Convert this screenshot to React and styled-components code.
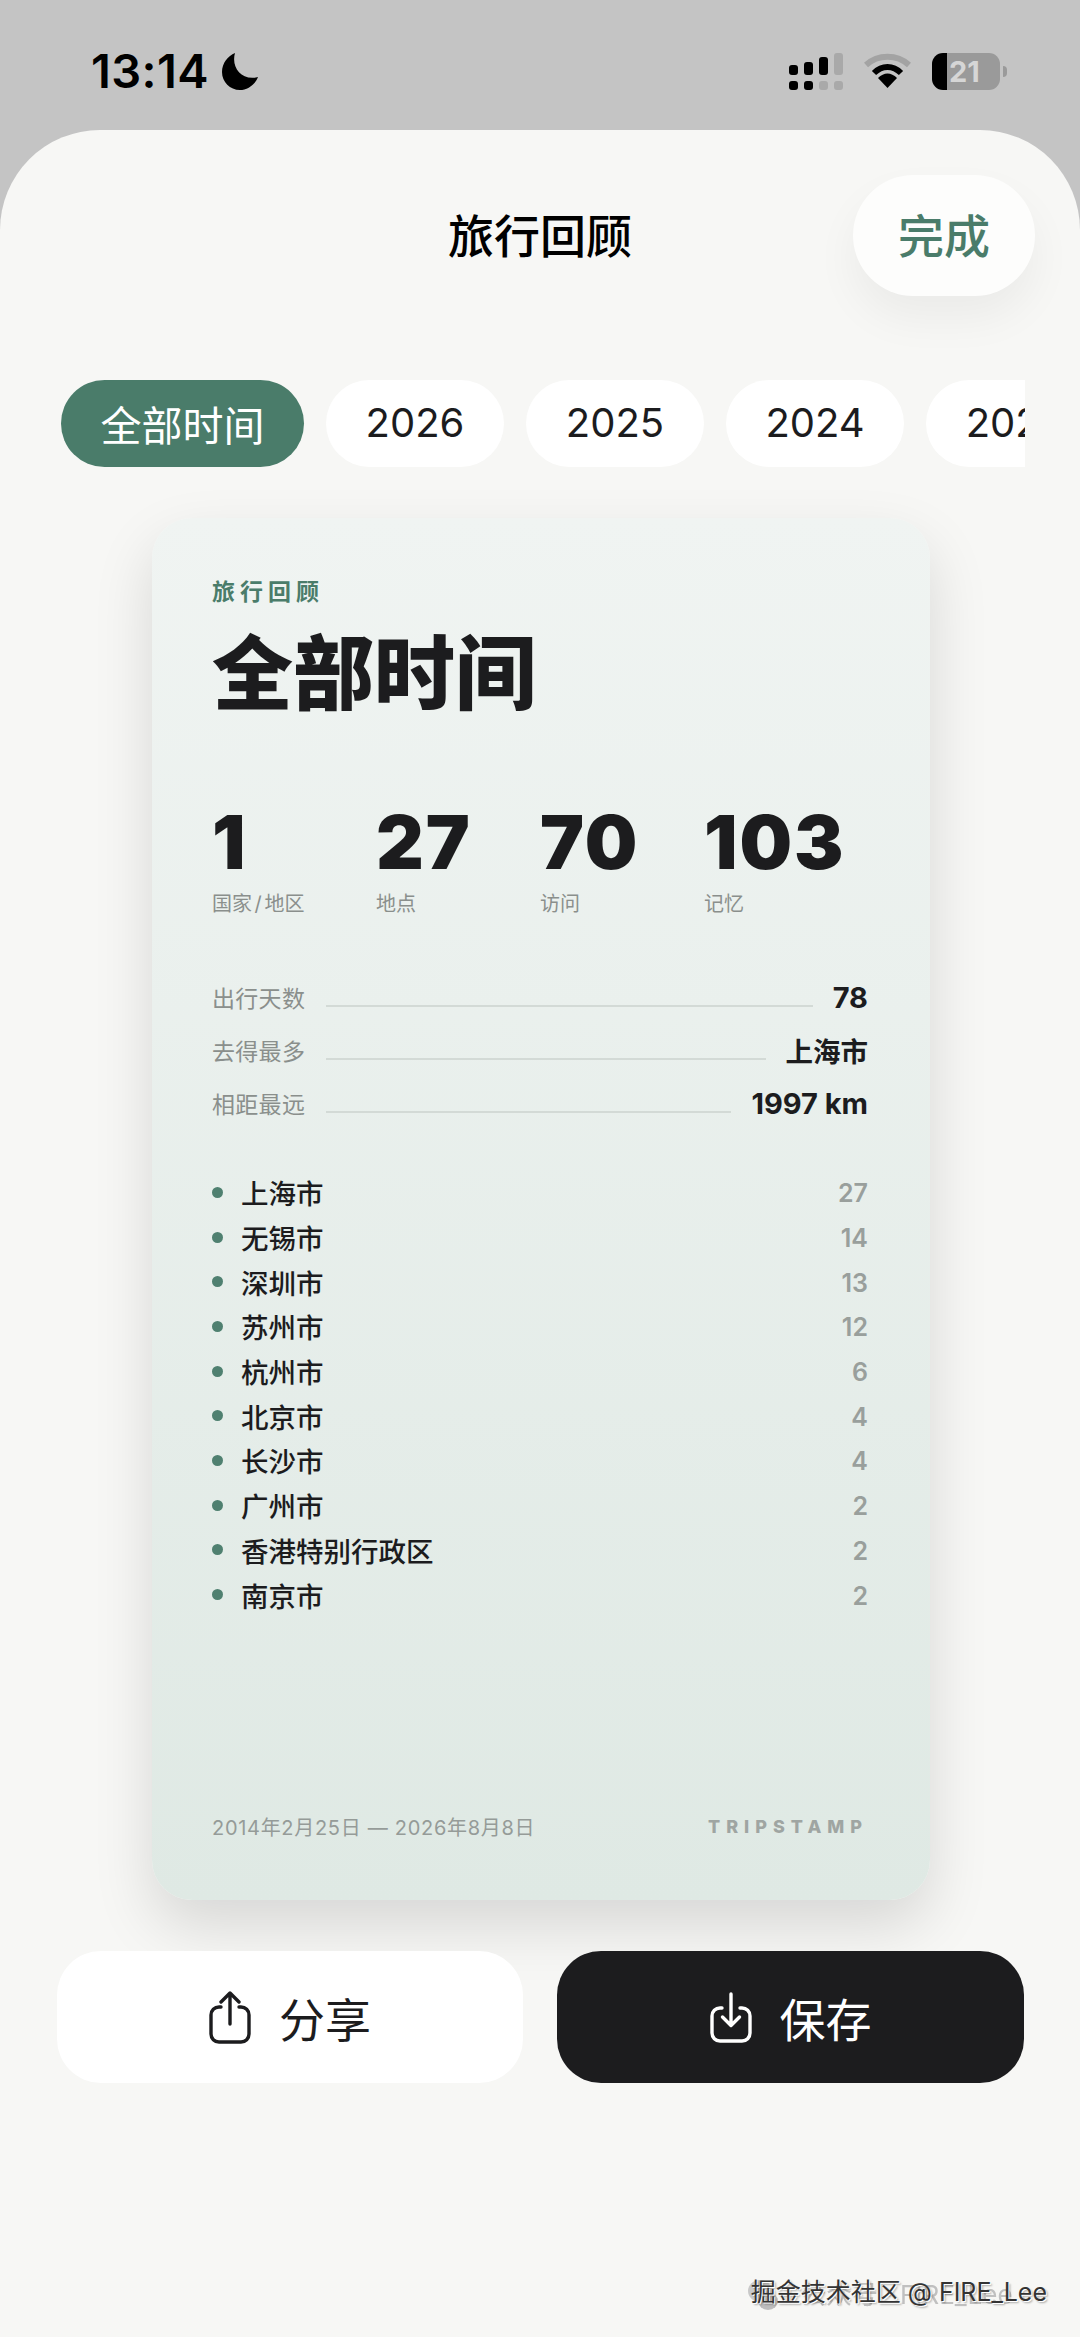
import React from 'react';
import styled, { createGlobalStyle } from 'styled-components';

const CJK = '"Noto Sans CJK SC"';
const GREEN = '#4a7c6a';
const INK = '#1c1c1e';

const cities = [
  ['上海市', 27],
  ['无锡市', 14],
  ['深圳市', 13],
  ['苏州市', 12],
  ['杭州市', 6],
  ['北京市', 4],
  ['长沙市', 4],
  ['广州市', 2],
  ['香港特别行政区', 2],
  ['南京市', 2],
];

const stats = [
  ['1', '国家 / 地区'],
  ['27', '地点'],
  ['70', '访问'],
  ['103', '记忆'],
];

const facts = [
  ['出行天数', '78', 29],
  ['去得最多', '上海市', 27.5],
  ['相距最远', '1997 km', 29],
];

const years = ['2026', '2025', '2024', '2023'];

const Global = createGlobalStyle`
  html, body { margin: 0; padding: 0; background: #c4c4c4; }
  * { box-sizing: border-box; }
  body { font-family: Inter, ${CJK}, sans-serif; }
`;

const Page = styled.div`
  position: relative;
  width: 1080px;
  height: 2337px;
  overflow: hidden;
  background: #c4c4c4;
  display: flex;
  flex-direction: column;
`;

const StatusBar = styled.div`
  height: 130px;
  flex: none;
  display: flex;
  justify-content: space-between;
  align-items: flex-start;
  padding: 48px 80px 0 91px;
`;

const Clock = styled.div`
  display: flex;
  align-items: center;
  gap: 13px;
  font-size: 47px;
  line-height: 46px;
  font-weight: 600;
  letter-spacing: 0.4px;
  color: #000;
`;

const Indicators = styled.div`
  display: flex;
  align-items: flex-start;
  gap: 21px;
  padding-top: 5px;
`;

const Battery = styled.div`
  position: relative;
  width: 68px;
  height: 37px;
  border-radius: 11px;
  background: linear-gradient(90deg, #000 22%, #9a9a9a 22%);
  color: #d6d6d6;
  font-size: 29px;
  line-height: 37px;
  font-weight: 700;
  padding-left: 17px;

  &::after {
    content: '';
    position: absolute;
    right: -7px;
    top: 13px;
    width: 4px;
    height: 11px;
    border-radius: 0 4px 4px 0;
    background: #9a9a9a;
  }
`;

const Sheet = styled.div`
  flex: 1;
  background: #f7f7f5;
  border-radius: 100px 100px 0 0;
  display: flex;
  flex-direction: column;
`;

const Header = styled.header`
  display: grid;
  grid-template-columns: 1fr auto 1fr;
  align-items: center;
  padding: 45px 45px 0 45px;
`;

const Title = styled.h1`
  grid-column: 2;
  margin: 0;
  font-size: 46px;
  line-height: 60px;
  font-weight: 500;
  color: #000;
`;

const DoneButton = styled.button`
  grid-column: 3;
  justify-self: end;
  width: 182px;
  height: 121px;
  padding: 0 0 5px;
  border: 0;
  border-radius: 61px;
  background: #fdfdfc;
  color: ${GREEN};
  font: 500 46px ${CJK}, sans-serif;
  box-shadow: 0 22px 44px rgba(0, 0, 0, 0.05);
`;

const PillRow = styled.div`
  display: flex;
  gap: 22px;
  margin: 84px 55px 0 61px;
  overflow: hidden;
`;

const Pill = styled.div`
  flex: none;
  width: ${(p) => (p.$active ? 243 : 178)}px;
  height: 87px;
  padding-bottom: 2px;
  border-radius: 44px;
  display: flex;
  align-items: center;
  justify-content: center;
  font-size: ${(p) => (p.$active ? 41 : 40)}px;
  font-weight: 400;
  color: ${(p) => (p.$active ? '#fff' : INK)};
  background: ${(p) => (p.$active ? GREEN : '#fff')};
`;

const Card = styled.section`
  width: 778px;
  height: 1382px;
  margin: 51px 0 0 152px;
  padding: 58px 62px 0 60px;
  border-radius: 40px;
  background: linear-gradient(180deg, #f0f4f2 0%, #dfe9e4 100%);
  box-shadow: 0 26px 60px rgba(0, 0, 0, 0.13);
  display: flex;
  flex-direction: column;
`;

const Eyebrow = styled.div`
  font-size: 23px;
  line-height: 32px;
  font-weight: 700;
  letter-spacing: 5px;
  color: ${GREEN};
`;

const BigTitle = styled.div`
  margin-top: 10px;
  font-size: 81px;
  line-height: 112px;
  font-weight: 900;
  color: ${INK};
`;

const StatGrid = styled.div`
  display: grid;
  grid-template-columns: repeat(4, 164px);
  margin-top: 74px;
`;

const StatNumber = styled.div`
  font-size: 74px;
  line-height: 76px;
  font-weight: 900;
  letter-spacing: 2px;
  color: ${INK};
`;

const StatLabel = styled.div`
  margin-top: 10px;
  font-size: 20px;
  line-height: 28px;
  word-spacing: -3px;
  color: #8a8f8c;
`;

const FactList = styled.div`
  margin-top: 62px;
  display: flex;
  flex-direction: column;
  gap: 19px;
`;

const FactRow = styled.div`
  display: flex;
  align-items: center;
  height: 34px;
`;

const FactLabel = styled.span`
  font-size: 23px;
  letter-spacing: 0.3px;
  color: #8a8f8c;
`;

const FactLine = styled.span`
  flex: 1;
  height: 2px;
  margin: 18px 20px 0 21px;
  background: #d3dad6;
`;

const FactValue = styled.span`
  font-size: ${(p) => p.$size}px;
  font-weight: 700;
  color: ${INK};
`;

const CityList = styled.div`
  margin-top: 50px;
  display: flex;
  flex-direction: column;
`;

const CityRow = styled.div`
  display: flex;
  align-items: center;
  height: 44.7px;
`;

const Dot = styled.span`
  width: 11px;
  height: 11px;
  border-radius: 50%;
  margin-right: 18px;
  background: #4f8070;
`;

const CityName = styled.span`
  flex: 1;
  font-size: 27.5px;
  font-weight: 500;
  color: ${INK};
`;

const CityCount = styled.span`
  padding-top: 2px;
  font-size: 25px;
  font-weight: 600;
  color: #999f9c;
`;

const CardFooter = styled.div`
  margin-top: auto;
  margin-bottom: 59px;
  display: flex;
  align-items: center;
  justify-content: space-between;
`;

const DateRange = styled.span`
  font-size: 20px;
  letter-spacing: 0.7px;
  color: #959b98;
`;

const Brand = styled.span`
  font-size: 18px;
  font-weight: 800;
  letter-spacing: 6px;
  color: #9fa5a2;
`;

const Actions = styled.div`
  display: grid;
  grid-template-columns: 466px 467px;
  gap: 34px;
  margin: 51px 0 0 57px;
`;

const ActionButton = styled.button`
  height: 132px;
  border: 0;
  border-radius: 44px;
  display: flex;
  align-items: center;
  justify-content: center;
  gap: 28px;
  font: 400 46px ${CJK}, sans-serif;
  color: ${(p) => (p.$dark ? '#fff' : INK)};
  background: ${(p) => (p.$dark ? INK : '#fff')};
`;

const WatermarkGhost = styled.div`
  position: absolute;
  left: 748px;
  top: 2278px;
  display: flex;
  align-items: flex-end;
  gap: 22px;
  font-size: 26px;
  line-height: 34px;
  color: #c0c0c0;
  filter: blur(0.7px);
`;

const Watermark = styled.div`
  position: absolute;
  right: 33px;
  top: 2274px;
  font-size: 25px;
  line-height: 36px;
  color: #333;
  text-shadow: 1px 1px 0 #fff, 2px 2px 2px rgba(0, 0, 0, 0.3);
`;

const Signal = () => (
  <svg width="54" height="38" viewBox="0 0 54 38">
    <g fill="#000">
      <rect x="0" y="12" width="9" height="10" rx="3" />
      <rect x="15" y="9" width="9" height="13" rx="3" />
      <rect x="30" y="4" width="9" height="18" rx="3" />
      <rect x="0" y="28" width="9" height="9" rx="3" />
      <rect x="15" y="28" width="9" height="9" rx="3" />
    </g>
    <g fill="#a9a9a9">
      <rect x="45" y="0" width="9" height="22" rx="3" />
      <rect x="30" y="28" width="9" height="9" rx="3" />
      <rect x="45" y="28" width="9" height="9" rx="3" />
    </g>
  </svg>
);

const Wifi = () => (
  <svg width="47" height="36" viewBox="0 0 47 36" fill="none" strokeWidth="6">
    <path d="M2 12C14 1 33 1 45 12" stroke="#a3a3a3" />
    <path d="M10 20C18 12 29 12 37 20" stroke="#000" />
    <path d="M14 25C20 19 27 19 33 25L23.5 35Z" fill="#000" strokeWidth="0" />
  </svg>
);

const Moon = () => (
  <svg width="36" height="37" viewBox="0 0 36 37">
    <path d="M13 0C9 14 19 28 36 24C33 32 25 37 18 37C8 37 0 29 0 19C0 10 6 3 13 0Z" fill="#000" />
  </svg>
);

const ShareIcon = ({ color }) => (
  <svg width="42" height="53" viewBox="0 0 42 53" fill="none" stroke={color} strokeWidth="3.4" strokeLinecap="round" strokeLinejoin="round">
    <path d="M12 16H10C5.5 16 2 19.5 2 24V43C2 47.5 5.5 51 10 51H32C36.5 51 40 47.5 40 43V24C40 19.5 36.5 16 32 16H30" />
    <path d="M21 33V3M12 11L21 2L30 11" />
  </svg>
);

const SaveIcon = ({ color }) => (
  <svg width="42" height="51" viewBox="0 0 42 51" fill="none" stroke={color} strokeWidth="3.4" strokeLinecap="round" strokeLinejoin="round">
    <path d="M12 16H10C5.5 16 2 19.5 2 24V41C2 45.5 5.5 49 10 49H32C36.5 49 40 45.5 40 41V24C40 19.5 36.5 16 32 16H30" />
    <path d="M21 2V33M12.5 25L21 33.5L29.5 25" />
  </svg>
);

const WechatMark = () => (
  <svg width="30" height="32" viewBox="0 0 30 32">
    <ellipse cx="12" cy="11" rx="12" ry="11" fill="#c9c9c9" />
    <ellipse cx="20" cy="21" rx="10" ry="9" fill="#bdbdbd" />
  </svg>
);

const App = () => (
  <Page>
    <Global />
    <StatusBar>
      <Clock>
        13:14
        <Moon />
      </Clock>
      <Indicators>
        <Signal />
        <Wifi />
        <Battery>21</Battery>
      </Indicators>
    </StatusBar>
    <Sheet>
      <Header>
        <Title>旅行回顾</Title>
        <DoneButton>完成</DoneButton>
      </Header>
      <PillRow>
        <Pill $active>全部时间</Pill>
        {years.map((y) => (
          <Pill key={y}>{y}</Pill>
        ))}
      </PillRow>
      <Card>
        <Eyebrow>旅行回顾</Eyebrow>
        <BigTitle>全部时间</BigTitle>
        <StatGrid>
          {stats.map(([n, label]) => (
            <div key={label}>
              <StatNumber>{n}</StatNumber>
              <StatLabel>{label}</StatLabel>
            </div>
          ))}
        </StatGrid>
        <FactList>
          {facts.map(([label, value, size]) => (
            <FactRow key={label}>
              <FactLabel>{label}</FactLabel>
              <FactLine />
              <FactValue $size={size}>{value}</FactValue>
            </FactRow>
          ))}
        </FactList>
        <CityList>
          {cities.map(([name, count]) => (
            <CityRow key={name}>
              <Dot />
              <CityName>{name}</CityName>
              <CityCount>{count}</CityCount>
            </CityRow>
          ))}
        </CityList>
        <CardFooter>
          <DateRange>2014年2月25日 — 2026年8月8日</DateRange>
          <Brand>TRIPSTAMP</Brand>
        </CardFooter>
      </Card>
      <Actions>
        <ActionButton>
          <ShareIcon color={INK} />
          分享
        </ActionButton>
        <ActionButton $dark>
          <SaveIcon color="#fff" />
          保存
        </ActionButton>
      </Actions>
    </Sheet>
    <WatermarkGhost>
      <WechatMark />
      公众号 · FIRE_Lee
    </WatermarkGhost>
    <Watermark>掘金技术社区 @ FIRE_Lee</Watermark>
  </Page>
);

export default App;
